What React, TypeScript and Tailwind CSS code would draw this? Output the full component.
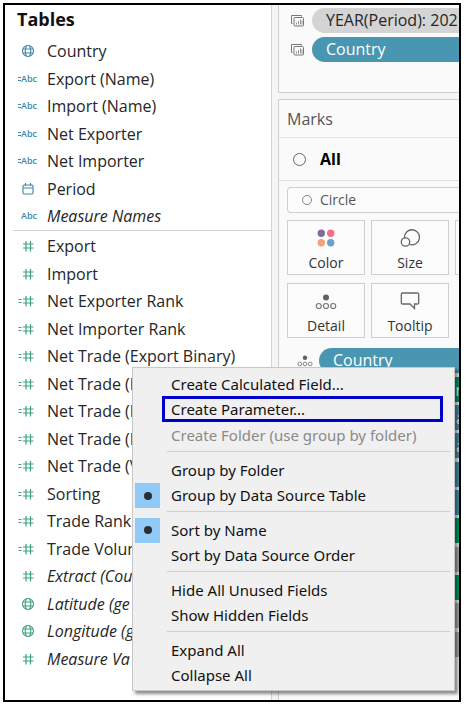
import type { ReactNode } from "react";

type IconKind = "globe" | "abc" | "calcAbc" | "date" | "hash" | "calcHash";
type Field = { icon: IconKind; name: string; italic?: boolean };

const dimensions: Field[] = [
  { icon: "globe", name: "Country" },
  { icon: "calcAbc", name: "Export (Name)" },
  { icon: "calcAbc", name: "Import (Name)" },
  { icon: "calcAbc", name: "Net Exporter" },
  { icon: "calcAbc", name: "Net Importer" },
  { icon: "date", name: "Period" },
  { icon: "abc", name: "Measure Names", italic: true },
];

const measures: Field[] = [
  { icon: "hash", name: "Export" },
  { icon: "hash", name: "Import" },
  { icon: "calcHash", name: "Net Exporter Rank" },
  { icon: "calcHash", name: "Net Importer Rank" },
  { icon: "calcHash", name: "Net Trade (Export Binary)" },
  { icon: "calcHash", name: "Net Trade (I" },
  { icon: "calcHash", name: "Net Trade (I" },
  { icon: "calcHash", name: "Net Trade (I" },
  { icon: "calcHash", name: "Net Trade (V" },
  { icon: "calcHash", name: "Sorting" },
  { icon: "calcHash", name: "Trade Rank" },
  { icon: "calcHash", name: "Trade Volum" },
  { icon: "hash", name: "Extract (Cou", italic: true },
  { icon: "globe", name: "Latitude (ge", italic: true },
  { icon: "globe", name: "Longitude (g", italic: true },
  { icon: "hash", name: "Measure Va", italic: true },
];

const menuGroups = [
  [
    { label: "Create Calculated Field..." },
    { label: "Create Parameter...", highlighted: true },
    { label: "Create Folder (use group by folder)", disabled: true },
  ],
  [{ label: "Group by Folder" }, { label: "Group by Data Source Table", checked: true }],
  [{ label: "Sort by Name", checked: true }, { label: "Sort by Data Source Order" }],
  [{ label: "Hide All Unused Fields" }, { label: "Show Hidden Fields" }],
  [{ label: "Expand All" }, { label: "Collapse All" }],
] as { label: string; highlighted?: boolean; disabled?: boolean; checked?: boolean }[][];

const shelfPills = [
  { color: "bg-[#00a06a]", text: "n" },
  { color: "bg-[#4996b2]", text: "a" },
  { color: "bg-[#4996b2]", text: "a" },
  { color: "bg-[#4996b2]", text: "t" },
  { color: "bg-[#4996b2]", text: "" },
  { color: "bg-[#00a06a]", text: "(" },
  { color: "bg-[#b4b0ae]", text: "" },
  { color: "bg-[#00a06a]", text: "(" },
  { color: "bg-[#b4b0ae]", text: "" },
  { color: "bg-[#b4b0ae]", text: "" },
];

function FieldIcon({ kind }: { kind: IconKind }) {
  if (kind === "abc" || kind === "calcAbc") {
    return (
      <span className="flex w-5 items-center justify-end text-[9px] leading-3 font-semibold">
        {kind === "calcAbc" && (
          <svg viewBox="0 0 3 6" className="h-1.5 w-[3px]" stroke="currentColor" fill="none">
            <path d="M0 1.5h3M0 4.5h3" />
          </svg>
        )}
        Abc
      </span>
    );
  }
  return (
    <svg viewBox="0 0 20 14" className="h-3.5 w-5" stroke="currentColor" fill="none" strokeWidth="1.1">
      {kind === "globe" && (
        <>
          <circle cx="11" cy="7" r="5.5" />
          <path d="M5.8 5h10.4M5.8 9h10.4M9.6 1.7c-1.6 3-1.6 7.600 0 10.600M12.400 1.700c1.600 3 1.600 7.600 0 10.600" />
        </>
      )}
      {kind === "date" && (
        <>
          <rect x="6" y="3" width="10" height="9" rx="1.200" />
          <path d="M6 6h10M8.500 1v3M13.500 1v3" />
        </>
      )}
      {(kind === "hash" || kind === "calcHash") && (
        <path d="M6 5h10.500M6 9h10.500M9 2v10.500M13.500 2v10.500" strokeWidth="1.200" />
      )}
      {kind === "calcHash" && <path d="M1.500 5.500h3M1.500 8.500h3" />}
    </svg>
  );
}

function FieldList({ fields, tone }: { fields: Field[]; tone: string }) {
  return (
    <ul>
      {fields.map((field, i) => (
        <li key={i} className="flex items-center gap-2.5 pl-3 odd:h-7 even:h-[27px]">
          <span className={tone}>
            <FieldIcon kind={field.icon} />
          </span>
          <span className={field.italic ? "italic" : ""}>{field.name}</span>
        </li>
      ))}
    </ul>
  );
}

function SheetsIcon() {
  return (
    <svg viewBox="0 0 14 12" className="h-3 w-3.5 shrink-0" fill="none" stroke="#777" strokeWidth="1">
      <path d="M1.500 8.500h-1v-8h10v1" />
      <rect x="3" y="2.500" width="9.500" height="8.500" rx="1" />
      <path d="M5.500 9.500v-2M7.500 9.500v-3.500M9.500 9.500v-5M11 9.500v-4" strokeWidth=".8" />
    </svg>
  );
}

function DetailIcon({ size }: { size: string }) {
  return (
    <svg viewBox="0 0 22 16" className={size} fill="none" stroke="#777" strokeWidth="1.200">
      <circle cx="11" cy="3.500" r="3" fill="#606060" stroke="none" />
      <circle cx="3.800" cy="12" r="2.500" />
      <circle cx="11" cy="12" r="2.500" />
      <circle cx="18.200" cy="12" r="2.500" />
    </svg>
  );
}

function MarkCard({ label, children }: { label: string; children?: ReactNode }) {
  return (
    <button
      type="button"
      className="flex h-[55px] w-[78px] shrink-0 flex-col items-center justify-end gap-1.5 border border-[#cfcfcf] bg-[#fcfcfc] pb-px text-sm text-[#333]"
    >
      {children}
      <span>{label}</span>
    </button>
  );
}

function ContextMenu() {
  return (
    <div
      role="menu"
      className="absolute top-[362px] left-[127px] w-[323px] border border-[#c8c8c8] bg-[#f0f0f0] pt-[3px] pb-0.5 font-['Noto_Sans','Open_Sans',sans-serif] text-[15px] shadow-[3px_3px_3px_rgba(0,0,0,0.45)]"
    >
      {menuGroups.map((group, g) => (
        <div
          key={g}
          className={g > 0 ? "before:mt-[3px] before:mr-1 before:mb-[5px] before:ml-[34px] before:block before:h-px before:bg-[#d0d0d0]" : ""}
        >
          {group.map((item) => (
            <button
              key={item.label}
              type="button"
              role="menuitem"
              disabled={item.disabled}
              className="relative flex w-full items-center gap-[11px] pl-0.5 text-left text-[#111] odd:h-[26px] even:h-[25px] disabled:text-[#8a8a8a]"
            >
              {item.highlighted && <span className="absolute -top-px bottom-0 right-[11px] left-[29px] border-3 border-[#0000cd]" />}
              <span className={item.checked ? "grid size-[25px] place-items-center bg-[#91c9f7]" : "size-[25px]"}>
                {item.checked && <span className="size-2 rounded-full bg-[#2b2f33]" />}
              </span>
              {item.label}
            </button>
          ))}
        </div>
      ))}
    </div>
  );
}

export default function App() {
  return (
    <div className="bg-white pt-[3px] pr-[5px] pb-[5px] pl-[3px] font-['Open_Sans','Noto_Sans',sans-serif] text-base text-[#262626]">
      <main className="relative flex border-2 border-black">
        <section className="w-[266px] shrink-0 bg-white pb-7">
          <h2 className="h-8 pl-3 text-lg leading-7 font-bold text-[#111]">Tables</h2>
          <FieldList fields={dimensions} tone="text-[#3f87a6]" />
          <div className="mb-px ml-2 h-px bg-[#d4d4d4]" />
          <FieldList fields={measures} tone="text-[#3da27c]" />
        </section>

        <section className="flex min-w-0 flex-1 flex-col gap-1.5 border-l border-[#d4d4d4] bg-[#f5f5f5] pl-1.5">
          <div className="flex h-[88px] flex-col gap-1 overflow-hidden border-b border-l border-[#d0d0d0] bg-[#fafafa] pt-[3px] pl-3">
            <div className="flex items-center gap-[7px]">
              <SheetsIcon />
              <span className="-mr-5 h-[25px] flex-1 rounded-l-full bg-[#d4d4d4] pl-3.5 leading-[25px] font-medium whitespace-nowrap">
                YEAR(Period): 202
              </span>
            </div>
            <div className="flex items-center gap-[7px]">
              <SheetsIcon />
              <span className="h-[25px] flex-1 rounded-l-full bg-[#4996b2] pl-3.5 leading-[25px] font-medium text-white">
                Country
              </span>
            </div>
          </div>

          <div className="flex-1 overflow-hidden border-t border-l border-[#d0d0d0] bg-[#fafafa]">
            <h3 className="h-[38px] border-b border-[#e4e4e4] pl-2 leading-[38px] text-[#555]">Marks</h3>
            <button type="button" className="flex h-[43px] w-full items-center gap-3.5 border-b border-[#e0e0e0] pl-3.5 font-bold text-black">
              <span className="size-[13px] rounded-full border border-[#666]" />
              All
            </button>
            <div className="mt-1.5 ml-2 flex h-[26px] items-center gap-2 rounded-l-sm border border-r-0 border-[#cfcfcf] bg-[#fcfcfc] pl-3.5">
              <span className="size-2.5 shrink-0 rounded-full border border-[#888]" />
              <select aria-label="Mark type" className="w-full appearance-none bg-transparent text-sm text-[#555]">
                <option>Circle</option>
              </select>
            </div>
            <div className="mt-[7px] flex gap-[6px] pl-2">
              <MarkCard label="Color">
                <svg viewBox="0 0 18 18" className="size-[18px]">
                  <circle cx="4.300" cy="4.300" r="3.700" fill="#84699d" />
                  <circle cx="13.700" cy="4.300" r="3.700" fill="#f46f84" />
                  <circle cx="4.300" cy="13.700" r="3.700" fill="#f7a076" />
                  <circle cx="13.700" cy="13.700" r="3.700" fill="#6f9fcb" />
                </svg>
              </MarkCard>
              <MarkCard label="Size">
                <svg viewBox="0 0 20 18" className="h-[18px] w-5" fill="none" stroke="#666" strokeWidth="1.300">
                  <circle cx="5.500" cy="13" r="4.200" />
                  <path d="M4.500 8.800a7.500 7.500 0 1 1 5.200 6.600" />
                </svg>
              </MarkCard>
              <MarkCard label="" />
            </div>
            <div className="mt-2 flex gap-[6px] pl-2">
              <MarkCard label="Detail">
                <DetailIcon size="h-4 w-[22px]" />
              </MarkCard>
              <MarkCard label="Tooltip">
                <svg viewBox="0 0 20 18" className="h-[18px] w-5" fill="none" stroke="#666" strokeWidth="1.300">
                  <path d="M2.500 1h15a1.200 1.200 0 0 1 1.200 1.200v8.600a1.200 1.200 0 0 1-1.200 1.200H14.500v4.500L10 12H2.500a1.200 1.200 0 0 1-1.200-1.200V2.200A1.200 1.200 0 0 1 2.500 1z" />
                </svg>
              </MarkCard>
            </div>
            <div className="pt-[7px]">
              <div className="mt-[3px] flex items-center gap-1.5 pl-[18px]">
                <DetailIcon size="h-3 w-4 shrink-0" />
                <span className="h-[25px] flex-1 rounded-l-full bg-[#4996b2] pl-3.5 leading-[25px] font-medium text-white">
                  Country
                </span>
              </div>
              {shelfPills.map((pill, i) => (
                <div key={i} className="mt-[3px] pl-10 nth-[3n+2]:mt-1">
                  <div className={`flex h-[25px] items-center justify-end overflow-hidden rounded-l-full text-white ${pill.color}`}>
                    <span className="-mr-1.5">{pill.text}</span>
                  </div>
                </div>
              ))}
            </div>
          </div>
        </section>

        <ContextMenu />
      </main>
    </div>
  );
}
